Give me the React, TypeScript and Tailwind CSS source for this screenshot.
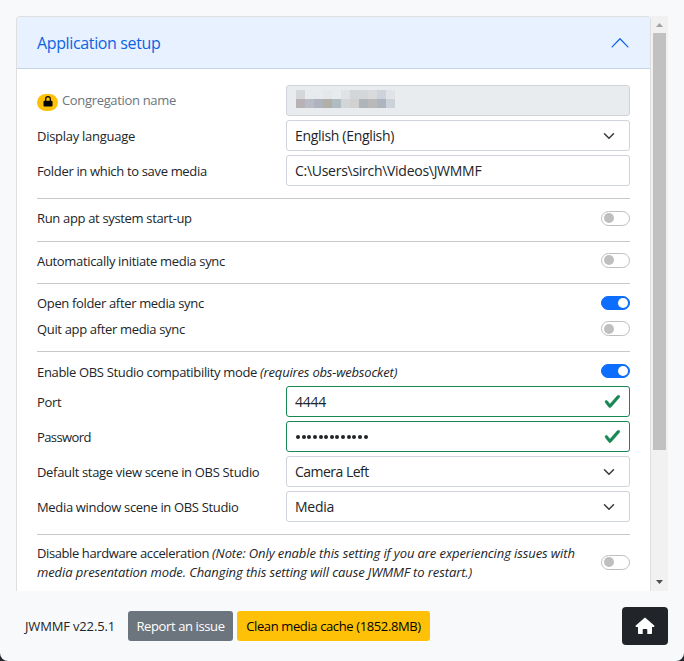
import type { ReactNode } from "react";

function Label({ children, className = "tracking-[-0.335px]" }: { children: ReactNode; className?: string }) {
  return <span className={`whitespace-nowrap ${className}`}>{children}</span>;
}

function Chevron() {
  return (
    <svg viewBox="0 0 16 16" className="mr-[14px] size-3 shrink-0" fill="none" stroke="#343a40" strokeWidth="2" strokeLinecap="round" strokeLinejoin="round">
      <path d="m2 5 6 6 6-6" />
    </svg>
  );
}

function Check() {
  return (
    <svg viewBox="0 0 8 8" className="mr-[8px] size-[17px] shrink-0" fill="#198754" stroke="#198754" strokeWidth=".15">
      <path d="M2.3 6.73.6 4.53c-.4-1.04.46-1.4 1.1-.8l1.1 1.4 3.4-3.8c.6-.63 1.6-.27 1.2.7l-4 4.6c-.43.5-.8.4-1.1.1z" />
    </svg>
  );
}

function Toggle({ on = false }: { on?: boolean }) {
  return (
    <span
      className={`flex w-[29px] shrink-0 items-center rounded-full border px-[1.5px] ${
        on ? "h-[14px] justify-end border-[#0d6efd] bg-[#0d6efd]" : "h-[15px] justify-start border-[#bfbfbf] bg-white"
      }`}
    >
      <span className={`size-[10px] rounded-full ${on ? "bg-white" : "bg-[#bfbfbf]"}`} />
    </span>
  );
}

function Field({ children, icon, valid = false, disabled = false }: { children: ReactNode; icon?: ReactNode; valid?: boolean; disabled?: boolean }) {
  return (
    <div
      className={`flex h-[31px] w-[344px] items-center justify-between rounded-[3px] border pl-2 text-[14px] tracking-[-0.28px] ${
        valid ? "border-[#198754]" : "border-[#ced4da]"
      } ${disabled ? "bg-[#e9ecef]" : "bg-white"}`}
    >
      {children}
      {icon}
    </div>
  );
}

function FieldRow({ label, children }: { label: ReactNode; children: ReactNode }) {
  return (
    <div className="flex h-[31px] items-center justify-between">
      <div className="pt-[2px]">{label}</div>
      {children}
    </div>
  );
}

const redacted = [
  ["#d5d6d9", "#e8ebed", "#e8ebed", "#e6e7ea", "#e8ebed", "#e1e2e6", "#d3d6d9", "#d3d7da", "#dad9dc", "#ced3db", "#e0e3e8"],
  ["#b8b2b4", "#b8bcc7", "#afb3be", "#b2aea8", "#b0bcc2", "#d2d6d7", "#d2d1d2", "#b0b5b9", "#bab9ba", "#afb5be", "#cbd2da"],
];

export default function App() {
  return (
    <div className="h-[661px] w-[684px] overflow-hidden bg-[#24262d]">
      <div className="flex h-full flex-col rounded-b-[8px] bg-[#f8f9fa] pt-4 font-['Open_Sans','Noto_Sans',sans-serif] text-[13px] leading-[19px] text-[#212529]">
        <div className="ml-4 flex h-[575px] w-[652px] overflow-hidden">
          <main className="h-full w-[635px] rounded-t-[4px] border border-b-0 border-[#dfdfdf] bg-white">
            <header className="flex h-[52px] items-center justify-between rounded-t-[3px] border-b border-[#c6d3e8] bg-[#e7f1ff] px-5 text-[16px] text-[#0c63e4]">
              <span className="pt-[2px] tracking-[-0.36px]">Application setup</span>
              <svg viewBox="0 0 16 16" className="mr-px size-[18px]" fill="none" stroke="#0c63e4" strokeWidth="1.1" strokeLinecap="round" strokeLinejoin="round">
                <path d="m1 11.5 7-7.3 7 7.3" />
              </svg>
            </header>

            <div className="px-5 pt-4">
              <section className="flex h-[114px] flex-col gap-1 border-b border-[#c8c9ca]">
                <FieldRow
                  label={
                    <div className="-mt-[2px] flex items-center gap-1 text-[#6c757d]">
                      <span className="mt-[3px] flex h-[17px] w-[21px] items-center justify-center rounded-full bg-[#ffc107]">
                        <svg viewBox="0 0 10 11" className="-mt-[2px] h-[11px] w-[10px]">
                          <path d="M2.7 5V3a2.3 2.3 0 0 1 4.6 0v2" fill="none" stroke="#000" strokeWidth="1.2" />
                          <rect x=".5" y="4.7" width="9" height="5.8" rx="1" fill="#000" />
                        </svg>
                      </span>
                      <Label>Congregation name</Label>
                    </div>
                  }
                >
                  <Field disabled>
                    <div className="mb-[3px] ml-px grid grid-cols-[repeat(11,9px)]">
                      {redacted.flat().map((color, i) => (
                        <span key={i} className="h-[9px]" style={{ backgroundColor: color }} />
                      ))}
                    </div>
                  </Field>
                </FieldRow>
                <FieldRow label={<Label className="tracking-[-0.27px]">Display language</Label>}>
                  <Field icon={<Chevron />}><span className="tracking-[-0.32px]">English (English)</span></Field>
                </FieldRow>
                <FieldRow label={<Label>Folder in which to save media</Label>}>
                  <Field>{"C:\\Users\\sirch\\Videos\\JWMMF"}</Field>
                </FieldRow>
              </section>

              <section className="flex h-[43px] items-center justify-between border-b border-[#c8c9ca] pb-1">
                <Label>Run app at system start-up</Label>
                <Toggle />
              </section>
              <section className="flex h-[42px] items-center justify-between border-b border-[#c8c9ca] pb-[3px]">
                <Label className="tracking-[-0.33px]">Automatically initiate media sync</Label>
                <span className="pb-[2px]"><Toggle /></span>
              </section>
              <section className="flex h-[68px] flex-col gap-[7px] border-b border-[#c8c9ca] pt-[10px]">
                <div className="flex h-[19px] items-start justify-between">
                  <Label className="tracking-[-0.345px]">Open folder after media sync</Label>
                  <span className="pt-[2px]"><Toggle on /></span>
                </div>
                <div className="flex h-[19px] items-start justify-between">
                  <Label>Quit app after media sync</Label>
                  <span className="pt-px"><Toggle /></span>
                </div>
              </section>

              <section className="flex h-[183px] flex-col gap-1 border-b border-[#c8c9ca] pt-[10px]">
                <div className="flex h-5 items-start justify-between">
                  <Label className="pt-px tracking-[-0.335px]">
                    Enable OBS Studio compatibility mode <i className="tracking-[-0.19px]">(requires obs-websocket)</i>
                  </Label>
                  <span className="pt-[2px]"><Toggle on /></span>
                </div>
                <FieldRow label={<Label>Port</Label>}>
                  <Field valid icon={<Check />}>4444</Field>
                </FieldRow>
                <FieldRow label={<Label className="tracking-[-0.6px]">Password</Label>}>
                  <Field valid icon={<Check />}>
                    <span className="flex gap-[1.65px] pl-px">
                      {Array.from({ length: 13 }, (_, i) => (
                        <span key={i} className="size-1 rounded-full bg-[#212529]" />
                      ))}
                    </span>
                  </Field>
                </FieldRow>
                <FieldRow label={<Label className="tracking-[-0.325px]">Default stage view scene in OBS Studio</Label>}>
                  <Field icon={<Chevron />}><span className="tracking-[-0.52px]">Camera Left</span></Field>
                </FieldRow>
                <FieldRow label={<Label>Media window scene in OBS Studio</Label>}>
                  <Field icon={<Chevron />}>Media</Field>
                </FieldRow>
              </section>

              <section className="flex h-[56px] items-center justify-between">
                <p className="tracking-[-0.4px]">
                  Disable hardware acceleration{" "}
                  <i className="tracking-[-0.1px]">
                    (Note: Only enable this setting if you are experiencing issues with
                    <br />
                    media presentation mode. Changing this setting will cause JWMMF to restart.)
                  </i>
                </p>
                <span className="pb-[2px]"><Toggle /></span>
              </section>
            </div>
          </main>

          <div className="flex w-[17px] flex-col items-center bg-[#f1f1f1]">
            <svg viewBox="0 0 17 17" className="size-[17px] shrink-0" fill="#a3a3a3"><path d="M5 11h7L8.5 7z" /></svg>
            <div className="h-[417px] w-[13px] bg-[#c1c1c1]" />
            <svg viewBox="0 0 17 17" className="mt-auto size-[17px] shrink-0" fill="#505050"><path d="M5 6h7l-3.500 4z" /></svg>
          </div>
        </div>

        <footer className="flex h-[70px] items-center pl-[25px] pr-4">
          <span className="w-[103px] pt-px tracking-[-0.16px]">JWMMF v22.5.1</span>
          <button className="mr-1 h-[30px] w-[105px] whitespace-nowrap rounded-[3px] bg-[#6c757d] tracking-[-0.39px] text-white">Report an issue</button>
          <button className="h-[30px] w-[193px] whitespace-nowrap rounded-[3px] bg-[#ffc107] tracking-[-0.38px] text-black">Clean media cache (1852.8MB)</button>
          <button className="ml-auto flex h-[38px] w-[46px] items-center justify-center rounded-[4px] bg-[#212529]">
            <svg viewBox="0 0 20 18" className="h-[18px] w-5" fill="#fff">
              <path d="M10 .8c-.3 0-.6.1-.9.4L.8 8.600c-.5.5-.2 1.400.5 1.400H3v6c0 .6.4 1 1 1h3.700v-4c0-.6.4-1 1-1h2.600c.6 0 1 .4 1 1v4H16c.6 0 1-.4 1-1v-6h1.700c.7 0 1-.9.5-1.400L10.900 1.200c-.3-.3-.6-.4-.9-.4z" />
            </svg>
          </button>
        </footer>
      </div>
    </div>
  );
}
